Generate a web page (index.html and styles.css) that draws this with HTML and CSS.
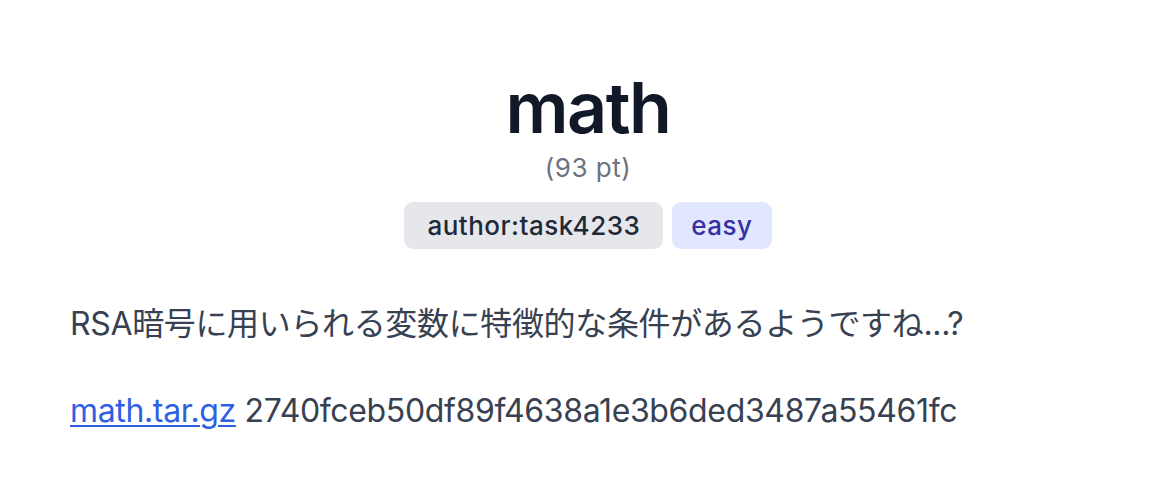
FILE: index.html
```html
<!DOCTYPE html>
<html lang="ja">
<head>
<meta charset="utf-8">
<title>math</title>
<link rel="stylesheet" href="styles.css">
</head>
<body>
<main class="page">
  <header class="head">
    <h1 class="title">math</h1>
    <div class="points">(93 pt)</div>
    <div class="tags">
      <span class="tag tag-author">author:task4233</span>
      <span class="tag tag-level">easy</span>
    </div>
  </header>
  <section class="desc">
    <p class="para">RSA暗号に用いられる変数に特徴的な条件があるようですね...?</p>
    <p class="para"><a class="file-link" href="#">math.tar.gz</a> 2740fceb50df89f4638a1e3b6ded3487a55461fc</p>
  </section>
</main>
</body>
</html>
```

FILE: styles.css
```css
html, body {
  margin: 0;
  padding: 0;
  background: #ffffff;
}
body {
  font-family: Inter, "Noto Sans CJK JP", sans-serif;
  color: #374151;
}
.page {
  padding: 73px 70px 0 70px;
}
.head {
  display: flex;
  flex-direction: column;
  align-items: center;
}
.title {
  margin: 0;
  font-size: 70px;
  line-height: 70px;
  font-weight: 600;
  color: #111827;
  letter-spacing: -1.5px;
}
.points {
  margin-top: 8px;
  font-size: 26px;
  line-height: 33px;
  letter-spacing: 0.5px;
  color: #6b7280;
}
.tags {
  margin-top: 18px;
  display: flex;
  gap: 9px;
}
.tag {
  display: inline-block;
  font-size: 26px;
  line-height: 33px;
  letter-spacing: 0.5px;
  padding: 7px 21px;
  border-radius: 9px;
  font-weight: 500;
}
.tag-author {
  background: #e5e7eb;
  color: #1f2937;
  padding: 7px 23px;
}
.tag-level {
  background: #e0e7ff;
  color: #3730a3;
  padding: 7px 19px;
}
.desc {
  margin-top: 54px;
  display: flex;
  flex-direction: column;
  gap: 45px;
}
.para {
  margin: 0;
  font-size: 32px;
  line-height: 42px;
  letter-spacing: -0.35px;
  color: #374151;
}
.cjk-line {
  letter-spacing: 0;
}
.file-link {
  color: #2f5fe3;
  text-decoration: underline;
  text-underline-offset: 3px;
  text-decoration-thickness: 2px;
}
```
